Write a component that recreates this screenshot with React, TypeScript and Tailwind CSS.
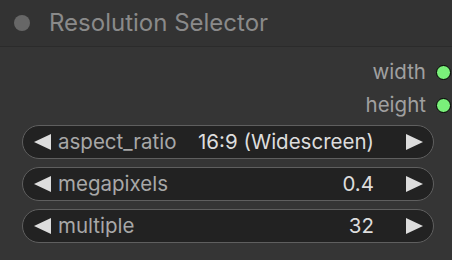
import React from "react";

const font = { fontFamily: "Inter, 'Noto Sans', sans-serif" };

function Arrow({ dir }: { dir: "left" | "right" }) {
  return (
    <svg width="17" height="16" viewBox="0 0 17 16" className="shrink-0">
      {dir === "left" ? (
        <polygon points="0,8 17,0 17,16" fill="#dddddd" />
      ) : (
        <polygon points="17,8 0,0 0,16" fill="#dddddd" />
      )}
    </svg>
  );
}

function Widget({ label, value }: { label: string; value: string }) {
  return (
    <div className="ml-[22px] mr-[18px] flex h-[34px] items-center rounded-full border border-[#5f5f5f] bg-[#222222] pl-[11px] pr-[10px]">
      <Arrow dir="left" />
      <span className="ml-[7px] text-[20.5px] text-[#a8a8a8]">{label}</span>
      <span className="ml-auto mr-[32px] text-[20.5px] text-[#dddddd]">{value}</span>
      <Arrow dir="right" />
    </div>
  );
}

function Output({ name }: { name: string }) {
  return (
    <div className="flex h-[33px] items-center justify-end pr-[1px]">
      <span className="text-[20.5px] text-[#a0a0a0]">{name}</span>
      <span className="ml-[10px] h-[15px] w-[15px] rounded-full border-[1.5px] border-black bg-[#7af07a]" />
    </div>
  );
}

export default function App() {
  return (
    <div className="h-[260px] w-[452px] overflow-hidden bg-[#353535]" style={font}>
      <div className="flex h-[47px] items-center border-b border-[#2b2b2b] bg-[#333333] pl-[14px]">
        <span className="h-[16px] w-[16px] rounded-full bg-[#676767]" />
        <span className="ml-[19px] text-[24px] text-[#8a8a8a]">Resolution Selector</span>
      </div>
      <div className="pt-[9px]">
        <Output name="width" />
        <Output name="height" />
      </div>
      <div className="mt-[3px] flex flex-col gap-[8px]">
        <Widget label="aspect_ratio" value="16:9 (Widescreen)" />
        <Widget label="megapixels" value="0.4" />
        <Widget label="multiple" value="32" />
      </div>
    </div>
  );
}
